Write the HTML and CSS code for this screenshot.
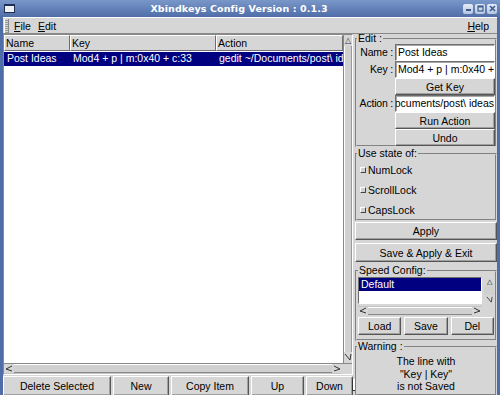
FILE: index.html
```html
<!DOCTYPE html>
<html>
<head>
<meta charset="utf-8">
<link rel="stylesheet" href="styles.css">
</head>
<body>
<div class="window">
  <div class="titlebar">
    <span class="winicon"></span>
    <span class="title">Xbindkeys Config Version : 0.1.3</span>
    <span class="tbtns">
      <span class="tbtn"><svg width="9" height="9" viewBox="0 0 9 9"><rect x="2" y="5" width="5" height="2" fill="#3d5a8f"/></svg></span>
      <span class="tbtn"><svg width="9" height="9" viewBox="0 0 9 9"><rect x="2" y="2" width="5" height="5" fill="none" stroke="#3d5a8f" stroke-width="1.2"/><rect x="2" y="2" width="5" height="1.5" fill="#3d5a8f"/></svg></span>
      <span class="tbtn"><svg width="9" height="9" viewBox="0 0 9 9"><path d="M2 2 L7 7 M7 2 L2 7" stroke="#3d5a8f" stroke-width="1.6"/></svg></span>
    </span>
  </div>
  <div class="client">
    <div class="menubar">
      <span class="grip"></span>
      <span class="menu"><u>F</u>ile</span>
      <span class="menu"><u>E</u>dit</span>
      <span class="spacer"></span>
      <span class="menu"><u>H</u>elp</span>
    </div>
    <div class="main">
      <div class="leftpane">
        <div class="listframe">
          <div class="listtop">
            <div class="table">
              <div class="thead">
                <div class="th c1">Name</div>
                <div class="th c2">Key</div>
                <div class="th c3">Action</div>
              </div>
              <div class="tr sel">
                <div class="td c1">Post Ideas</div>
                <div class="td c2">Mod4 + p | m:0x40 + c:33</div>
                <div class="td c3">gedit ~/Documents/post\ ideas</div>
              </div>
            </div>
            <div class="vscroll">
              <span class="arrow up">&#9651;</span>
              <span class="trough"></span>
              <span class="arrow down"><svg width="8" height="8" viewBox="0 0 8 8"><path d="M1 1 L6 7 L7 1" fill="none" stroke="#333" stroke-width="1"/></svg></span>
            </div>
          </div>
          <div class="hscroll">
            <span class="harrow"><svg width="8" height="7" viewBox="0 0 8 7"><path d="M7 1 L1 4 L7 6" fill="none" stroke="#333" stroke-width="1"/></svg></span>
            <span class="htrough"></span>
            <span class="harrow"><svg width="8" height="7" viewBox="0 0 8 7"><path d="M1 1 L7 4 L1 6" fill="none" stroke="#333" stroke-width="1"/></svg></span>
            <span class="corner"></span>
          </div>
        </div>
        <div class="btnrow">
          <button class="btn b-del">Delete Selected</button>
          <button class="btn b-new">New</button>
          <button class="btn b-copy">Copy Item</button>
          <button class="btn b-up">Up</button>
          <button class="btn b-down">Down</button>
        </div>
      </div>
      <div class="handle"><span class="handlemark"></span></div>
      <div class="rightpane">
        <fieldset class="frame edit">
          <legend>Edit :</legend>
          <div class="form">
            <span class="lbl">Name :</span><span class="input">Post Ideas</span>
            <span class="lbl">Key :</span><span class="input">Mod4 + p | m:0x40 + c:33</span>
            <span></span><button class="btn">Get Key</button>
            <span class="lbl">Action :</span><span class="input rtl"><span>gedit ~/Documents/post\ ideas</span></span>
            <span></span><button class="btn">Run Action</button>
            <span></span><button class="btn">Undo</button>
          </div>
        </fieldset>
        <fieldset class="frame state">
          <legend>Use state of:</legend>
          <div class="check"><span class="box"></span>NumLock</div>
          <div class="check"><span class="box"></span>ScrollLock</div>
          <div class="check"><span class="box"></span>CapsLock</div>
        </fieldset>
        <button class="btn wide apply">Apply</button>
        <button class="btn wide save">Save &amp; Apply &amp; Exit</button>
        <fieldset class="frame speed">
          <legend>Speed Config:</legend>
          <div class="speedlist">
            <div class="slist"><div class="srow">Default</div></div>
            <div class="svscroll">
              <span class="sarrow">&#9651;</span>
              <span class="strough"></span>
              <span class="sarrow"><svg width="7" height="7" viewBox="0 0 8 8"><path d="M1 1 L6 7 L7 1" fill="none" stroke="#333" stroke-width="1"/></svg></span>
            </div>
          </div>
          <div class="shscroll">
            <span class="harrow"><svg width="8" height="7" viewBox="0 0 8 7"><path d="M7 1 L1 4 L7 6" fill="none" stroke="#333" stroke-width="1"/></svg></span>
            <span class="htrough"></span>
            <span class="harrow"><svg width="8" height="7" viewBox="0 0 8 7"><path d="M1 1 L7 4 L1 6" fill="none" stroke="#333" stroke-width="1"/></svg></span>
          </div>
          <div class="sbtns">
            <button class="btn">Load</button>
            <button class="btn">Save</button>
            <button class="btn">Del</button>
          </div>
        </fieldset>
        <fieldset class="frame warning">
          <legend>Warning :</legend>
          <div class="warntext">The line with<br>"Key | Key"<br>is not Saved</div>
        </fieldset>
      </div>
    </div>
  </div>
</div>
</body>
</html>
```

FILE: styles.css
```css
* { box-sizing: border-box; }
html, body { margin: 0; padding: 0; }
body {
  width: 500px; height: 395px; overflow: hidden;
  font-family: "Liberation Sans", Arial, sans-serif;
  font-size: 10.5px; color: #000;
  background: #4b6aa4;
}
.window {
  width: 500px; height: 395px;
  display: flex; flex-direction: column;
  background: #4f6ea8;
  padding: 0 3px 3px 3px;
}
.titlebar {
  height: 17px; flex: none;
  display: flex; align-items: center;
  background: linear-gradient(#7a97c9, #4f6ea8);
  margin: 0 -3px; padding: 0 3px 0 4px;
}
.winicon {
  width: 11px; height: 9px; flex: none;
  background: #eef0f4;
  border: 1px solid #1e2f55;
  border-top-width: 2px;
}
.title {
  flex: 1; text-align: center;
  font-family: "DejaVu Sans", sans-serif; font-weight: bold;
  font-size: 9.5px; color: #fff; letter-spacing: 0.1px;
}
.tbtns { display: flex; gap: 2px; }
.tbtn {
  width: 10px; height: 10px; display: flex; align-items: center; justify-content: center;
  background: linear-gradient(#e6ecf5, #b6c5de);
  border-radius: 2px;
}
.client {
  flex: 1; display: flex; flex-direction: column;
  background: #d6d6d6;
}
.menubar {
  height: 17px; flex: none;
  display: flex; align-items: center;
  border-top: 1px solid #fff;
  border-bottom: 1px solid #8a8a8a;
  padding: 0 4px 0 1px;
}
.grip {
  width: 5px; height: 14px; margin-right: 2px;
  border-left: 1px solid #fff; border-right: 1px solid #888;
  background: repeating-linear-gradient(#d6d6d6 0 1px, #9a9a9a 1px 2px);
}
.menu { padding: 0 3px; margin-right: 1px; font-size: 10.5px; }
.menu u { text-decoration: underline; text-underline-offset: 1px; }
.spacer { flex: 1; }
.main {
  flex: 1; display: flex;
  min-height: 0;
}
.leftpane {
  width: 350px; flex: none;
  display: flex; flex-direction: column;
}
.listframe {
  flex: 1; display: flex; flex-direction: column;
  border-top: 1px solid #888; border-left: 1px solid #888;
  border-right: 1px solid #fff; border-bottom: 1px solid #fff;
  margin-bottom: 1px;
}
.listtop { flex: 1; display: flex; min-height: 0; }
.table { flex: 1; background: #fff; overflow: hidden; }
.thead { display: flex; height: 16px; }
.th {
  background: #d6d6d6;
  border: 1px solid; border-color: #fff #6e6e6e #6e6e6e #fff;
  padding: 1px 1px 0; line-height: 13px; white-space: nowrap;
}
.c1 { width: 66px; flex: none; }
.c2 { width: 146px; flex: none; }
.c3 { flex: 1; min-width: 0; overflow: hidden; white-space: nowrap; }
.tr { display: flex; height: 14px; }
.tr.sel { background: #000080; color: #fff; margin-top: 1px; }
.td { padding: 0 3px; line-height: 13px; white-space: nowrap; overflow: hidden; }
.vscroll {
  width: 9px; flex: none; display: flex; flex-direction: column;
  background: #c4c4c4;
  border-left: 1px solid #888;
}
.arrow {
  height: 11px; display: flex; align-items: center; justify-content: center;
  font-size: 8px; line-height: 8px; color: #333; background: #d6d6d6;
}
.trough { flex: 1; background: #d0d0d0; border-left: 1px solid #fff; border-right: 1px solid #999; }
.hscroll {
  height: 11px; flex: none; display: flex; align-items: center;
  background: #c4c4c4; border-top: 1px solid #888;
}
.harrow { width: 10px; height: 9px; display: flex; align-items: center; justify-content: center; background: #d6d6d6; }
.htrough { flex: 1; height: 9px; background: #d0d0d0; border-top: 1px solid #fff; border-bottom: 1px solid #888; }
.corner { width: 10px; height: 10px; background: #d6d6d6; }
.btnrow { height: 20px; flex: none; display: flex; gap: 2px; }
.btn {
  font-family: inherit; font-size: 10.5px; color: #000;
  background: #d6d6d6; margin: 0; padding: 0;
  border: 1px solid; border-color: #fff #555 #555 #fff;
  box-shadow: inset -1px -1px 0 #a0a0a0;
  line-height: 14px; white-space: nowrap;
}
.b-del { width: 108px; }
.b-new { width: 56px; }
.b-copy { width: 78px; }
.b-up { width: 53px; }
.b-down { width: 47px; }
.handle { width: 2px; flex: none; display: flex; align-items: flex-end; padding-bottom: 5px; }
.handlemark { flex: none; width: 4px; height: 12px; margin-left: -1px; border-left: 1px solid #333; border-bottom: 1px solid #333; background: #fff; }
.rightpane {
  flex: 1; display: flex; flex-direction: column;
  min-width: 0;
}
.frame {
  margin: 0; padding: 0 0 1px 0;
  border: 2px groove #d6d6d6;
  min-width: 0;
}
.frame legend {
  padding: 0 1px; margin-left: 0; font-size: 10.5px; line-height: 11px;
}
.edit { height: 114px; margin-top: -1px; }
.form {
  display: grid; grid-template-columns: 37px 1fr;
  grid-auto-rows: 17px; column-gap: 1px;
  margin-top: 0;
}
.lbl { text-align: right; line-height: 16px; white-space: nowrap; letter-spacing: -0.2px; padding-right: 1px; }
.input {
  background: #fff; border: 1px solid; border-color: #6e6e6e #fff #fff #6e6e6e;
  box-shadow: inset 1px 1px 0 #a8a8a8;
  padding: 0 2px; line-height: 15px; white-space: nowrap; overflow: hidden;
}
.rtl { display: flex; justify-content: flex-end; padding: 0; }
.rtl span { flex: none; }
.state { height: 73px; margin-top: 1px; padding: 1px 0 0 0; }
.check { height: 20px; display: flex; align-items: center; }
.box {
  width: 6px; height: 6px; margin: 0 2px 0 3px;
  border: 1px solid; border-color: #fff #444 #444 #fff;
  background: #d0d0d0;
}
.wide { height: 18px; width: 100%; flex: none; }
.apply { margin-top: 1px; }
.save { margin-top: 3px; height: 19px; }
.speed { height: 76px; margin-top: 3px; padding: 0 1px 1px 1px; }
.speedlist { display: flex; height: 27px; gap: 2px; margin-top: 1px; }
.slist {
  flex: 1; background: #fff;
  border: 1px solid; border-color: #6e6e6e #fff #fff #6e6e6e;
}
.srow { background: #000080; color: #fff; height: 13px; line-height: 12px; padding-left: 2px; }
.svscroll { width: 10px; flex: none; display: flex; flex-direction: column; background: #c4c4c4; }
.sarrow { height: 9px; display: flex; align-items: center; justify-content: center; font-size: 7px; line-height: 7px; background: #d6d6d6; }
.strough { flex: 1; background: #d0d0d0; }
.shscroll { height: 9px; display: flex; align-items: center; margin: 2px 12px 2px 0; background: #c4c4c4; }
.shscroll .harrow { height: 8px; }
.shscroll .htrough { height: 8px; }
.sbtns { display: flex; gap: 3px; height: 18px; }
.sbtns .btn { flex: 1; }
.warning { flex: 1; margin-top: 0; }
.warntext { text-align: center; line-height: 12.5px; padding-top: 3px; }
```
